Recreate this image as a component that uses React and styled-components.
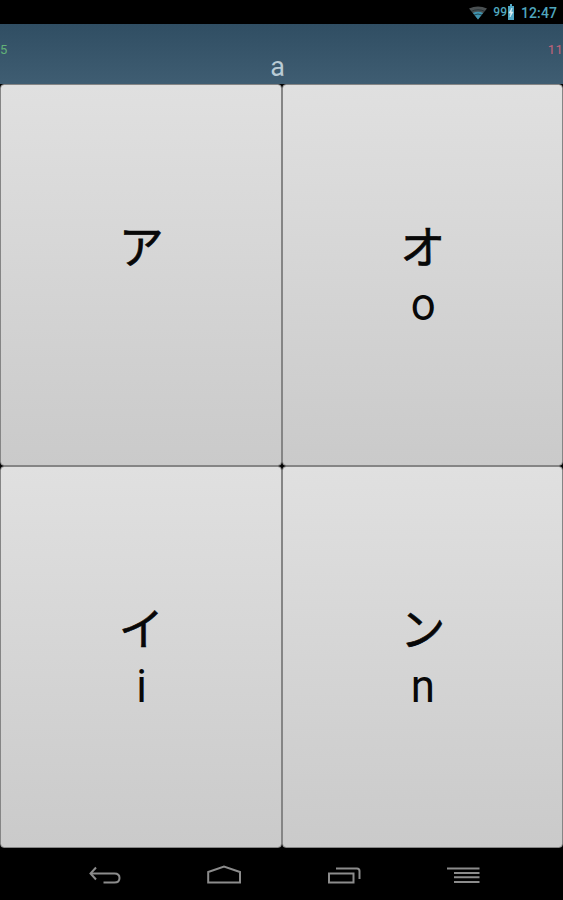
import React from 'react';
import styled, { createGlobalStyle } from 'styled-components';

const GlobalStyle = createGlobalStyle`
  * { box-sizing: border-box; }
  body { margin: 0; background: #000; }
`;

const Screen = styled.div`
  width: 563px;
  height: 900px;
  display: flex;
  flex-direction: column;
  overflow: hidden;
  background: #000;
  font-family: Roboto, "Noto Sans CJK JP", sans-serif;
`;

const StatusBar = styled.header`
  height: 24px;
  flex: none;
  display: flex;
  align-items: center;
  justify-content: flex-end;
  padding: 1px 5px 0 0;
  color: #4fa6bd;
`;

const WifiIcon = styled.svg`
  width: 20px;
  height: 14px;
  margin-right: 5px;
`;

const BatteryLevel = styled.span`
  font-size: 12px;
  font-weight: 500;
  line-height: 14px;
  margin-top: -1px;
`;

const BatteryIcon = styled.svg`
  width: 6px;
  height: 16px;
  margin: -1px 7px 0 1px;
`;

const Clock = styled.time`
  font-size: 14px;
  font-weight: 500;
  line-height: 16px;
  letter-spacing: 0.1px;
  width: 37px;
  white-space: nowrap;
`;

const Prompt = styled.section`
  height: 60px;
  flex: none;
  display: grid;
  grid-template-columns: 1fr auto 1fr;
  background: linear-gradient(#304e63, #3f5d72);
`;

const Score = styled.span`
  padding-top: 17px;
  font-size: 13px;
  line-height: 18px;
  letter-spacing: 0.3px;
  color: ${({ $wrong }) => ($wrong ? '#c2637b' : '#62b177')};
  text-align: ${({ $wrong }) => ($wrong ? 'right' : 'left')};
`;

const Question = styled.span`
  padding: 28px 8px 0 0;
  font-size: 27px;
  line-height: 30px;
  color: #b9cbd5;
`;

const Choices = styled.main`
  height: 764px;
  flex: none;
  display: grid;
  grid-template: 1fr 1fr / 1fr 1fr;
`;

const Choice = styled.button`
  margin: 0;
  padding: 131px 0 0 1px;
  display: flex;
  flex-direction: column;
  align-items: center;
  border: 1px solid #858585;
  border-radius: 4px;
  background: linear-gradient(#e0e0e0, #cacaca);
  color: #080808;
  font-family: inherit;
`;

const Kana = styled.span`
  font-family: "Noto Sans CJK JP", sans-serif;
  font-size: 45px;
  font-weight: 400;
  line-height: 58px;
  -webkit-text-stroke: 0.6px currentColor;
`;

const Reading = styled.span`
  padding-top: 2px;
  font-size: 46px;
  line-height: 56px;
  transform: scaleX(0.95);
`;

const NavBar = styled.nav`
  height: 52px;
  flex: none;
  display: flex;
  justify-content: center;
  gap: 80px;
  padding: 7px 0 0 7px;
`;

const NavButton = styled.button`
  width: 40px;
  height: 40px;
  padding: 0;
  border: 0;
  background: none;
`;

const NavIcon = styled.svg`
  display: block;
  width: 40px;
  height: 40px;
  fill: none;
  stroke: #8c8c8c;
  stroke-width: 2;
`;

const choices = [
  { kana: 'ア', reading: '' },
  { kana: 'オ', reading: 'o' },
  { kana: 'イ', reading: 'i' },
  { kana: 'ン', reading: 'n' },
];

const navItems = [
  { label: 'Back', paths: ['M6 18.5H29.5Q34.5 18.5 34.5 23Q34.5 27.5 29.5 27.5H18.5', 'M11 12.5L5.5 18.5L11 24.5'] },
  { label: 'Home', paths: ['M3.2 27.5V17L19 11.5L35 17V27.5Z'] },
  { label: 'Recent apps', paths: ['M4 18.5H28.5V27.5H4Z', 'M11 13.5H32Q34.5 13.5 34.5 16V24'] },
  { label: 'Menu', paths: ['M2 13.5H34.5', 'M9 18H34.5M9 22.2H34.5M9 27H34.5'] },
];

export default function App() {
  return (
    <>
      <GlobalStyle />
      <Screen>
        <StatusBar>
          <WifiIcon viewBox="0 0 20 14">
            <path d="M1 2.5Q10-1.5 19 2.5L10 13.5Z" fill="#4a5052" />
            <path d="M5 7Q10 4.5 15 7L10 13.5Z" fill="#3e93af" />
            <path d="M3 5.5Q10 2 17 5.5M6 9Q10 7 14 9" fill="none" stroke="#17272d" strokeWidth="0.7" />
          </WifiIcon>
          <BatteryLevel>99</BatteryLevel>
          <BatteryIcon viewBox="0 0 6 16">
            <path d="M2 0H4V2H6V16H0V2H2Z" fill="#4fa6c4" />
            <path d="M4 4L1 9H3L2 13L5 8H3Z" fill="#dceef3" stroke="#dceef3" strokeWidth="0.6" />
          </BatteryIcon>
          <Clock>12:47</Clock>
        </StatusBar>
        <Prompt>
          <Score>5</Score>
          <Question>a</Question>
          <Score $wrong>11</Score>
        </Prompt>
        <Choices>
          {choices.map(({ kana, reading }) => (
            <Choice key={kana}>
              <Kana>{kana}</Kana>
              <Reading>{reading}</Reading>
            </Choice>
          ))}
        </Choices>
        <NavBar>
          {navItems.map(({ label, paths }) => (
            <NavButton key={label} aria-label={label}>
              <NavIcon viewBox="0 0 40 40">
                {paths.map((d) => <path key={d} d={d} />)}
              </NavIcon>
            </NavButton>
          ))}
        </NavBar>
      </Screen>
    </>
  );
}
